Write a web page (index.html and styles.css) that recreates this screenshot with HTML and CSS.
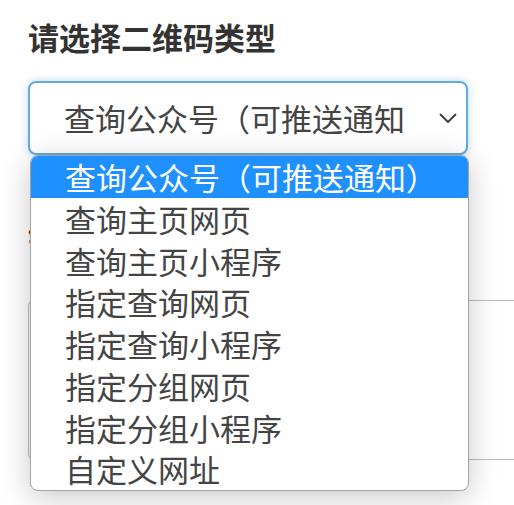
FILE: index.html
```html
<!DOCTYPE html>
<html lang="zh">
<head>
<meta charset="utf-8">
<link rel="stylesheet" href="styles.css">
</head>
<body>
<div class="page">
  <h2 class="title">请选择二维码类型</h2>
  <div class="select">
    <span class="select-value">查询公众号（可推送通知</span>
    <svg class="chev" width="18" height="10" viewBox="0 0 18 10"><polyline points="1,1 9,9 17,1" fill="none" stroke="#444" stroke-width="2"/></svg>
    <ul class="menu">
      <li class="opt active">查询公众号（可推送通知）</li>
      <li class="opt">查询主页网页</li>
      <li class="opt">查询主页小程序</li>
      <li class="opt">指定查询网页</li>
      <li class="opt">指定查询小程序</li>
      <li class="opt">指定分组网页</li>
      <li class="opt">指定分组小程序</li>
      <li class="opt">自定义网址</li>
    </ul>
  </div>
  <h2 class="title second">链</h2>
  <div class="field"></div>
</div>
</body>
</html>
```

FILE: styles.css
```css
html, body {
  margin: 0;
  padding: 0;
  background: #fff;
  overflow: hidden;
  height: 505px;
}
body {
  font-family: "Noto Sans CJK SC", "Noto Sans", sans-serif;
  color: #333;
}
.page {
  padding: 16px 0 0 28px;
}
.title {
  margin: 0;
  font-size: 31px;
  font-weight: 700;
  line-height: 42px;
  color: #333;
}
.select {
  position: relative;
  margin-top: 23px;
  height: 70px;
  width: 402px;
  border: 2px solid #62aae6;
  border-radius: 8px;
  box-shadow: 0 0 8px rgba(98, 170, 230, 0.45);
  display: flex;
  align-items: center;
  padding-left: 34px;
}
.select-value {
  font-size: 31px;
  color: #444;
  flex: 1;
  line-height: 40px;
}
.chev {
  margin-right: 9px;
}
.menu {
  position: absolute;
  left: 0;
  top: 72px;
  width: 437px;
  margin: 0;
  padding: 0;
  list-style: none;
  background: #fff;
  border: 1px solid #a3a3a3;
  border-radius: 8px;
  overflow: hidden;
  box-shadow: 0 6px 30px rgba(0, 0, 0, 0.22);
  z-index: 2;
}
.opt {
  height: 41.75px;
  line-height: 41.75px;
  padding-left: 34px;
  font-size: 31px;
  color: #444;
  white-space: nowrap;
}
.opt.active {
  background: #1e90ff;
  color: #fff;
}
.second {
  margin-top: 62px;
}
.field {
  margin-top: 41px;
  height: 158px;
  border: 1px solid #bcbcbc;
  border-right: none;
  border-radius: 6px 0 0 6px;
}
```
